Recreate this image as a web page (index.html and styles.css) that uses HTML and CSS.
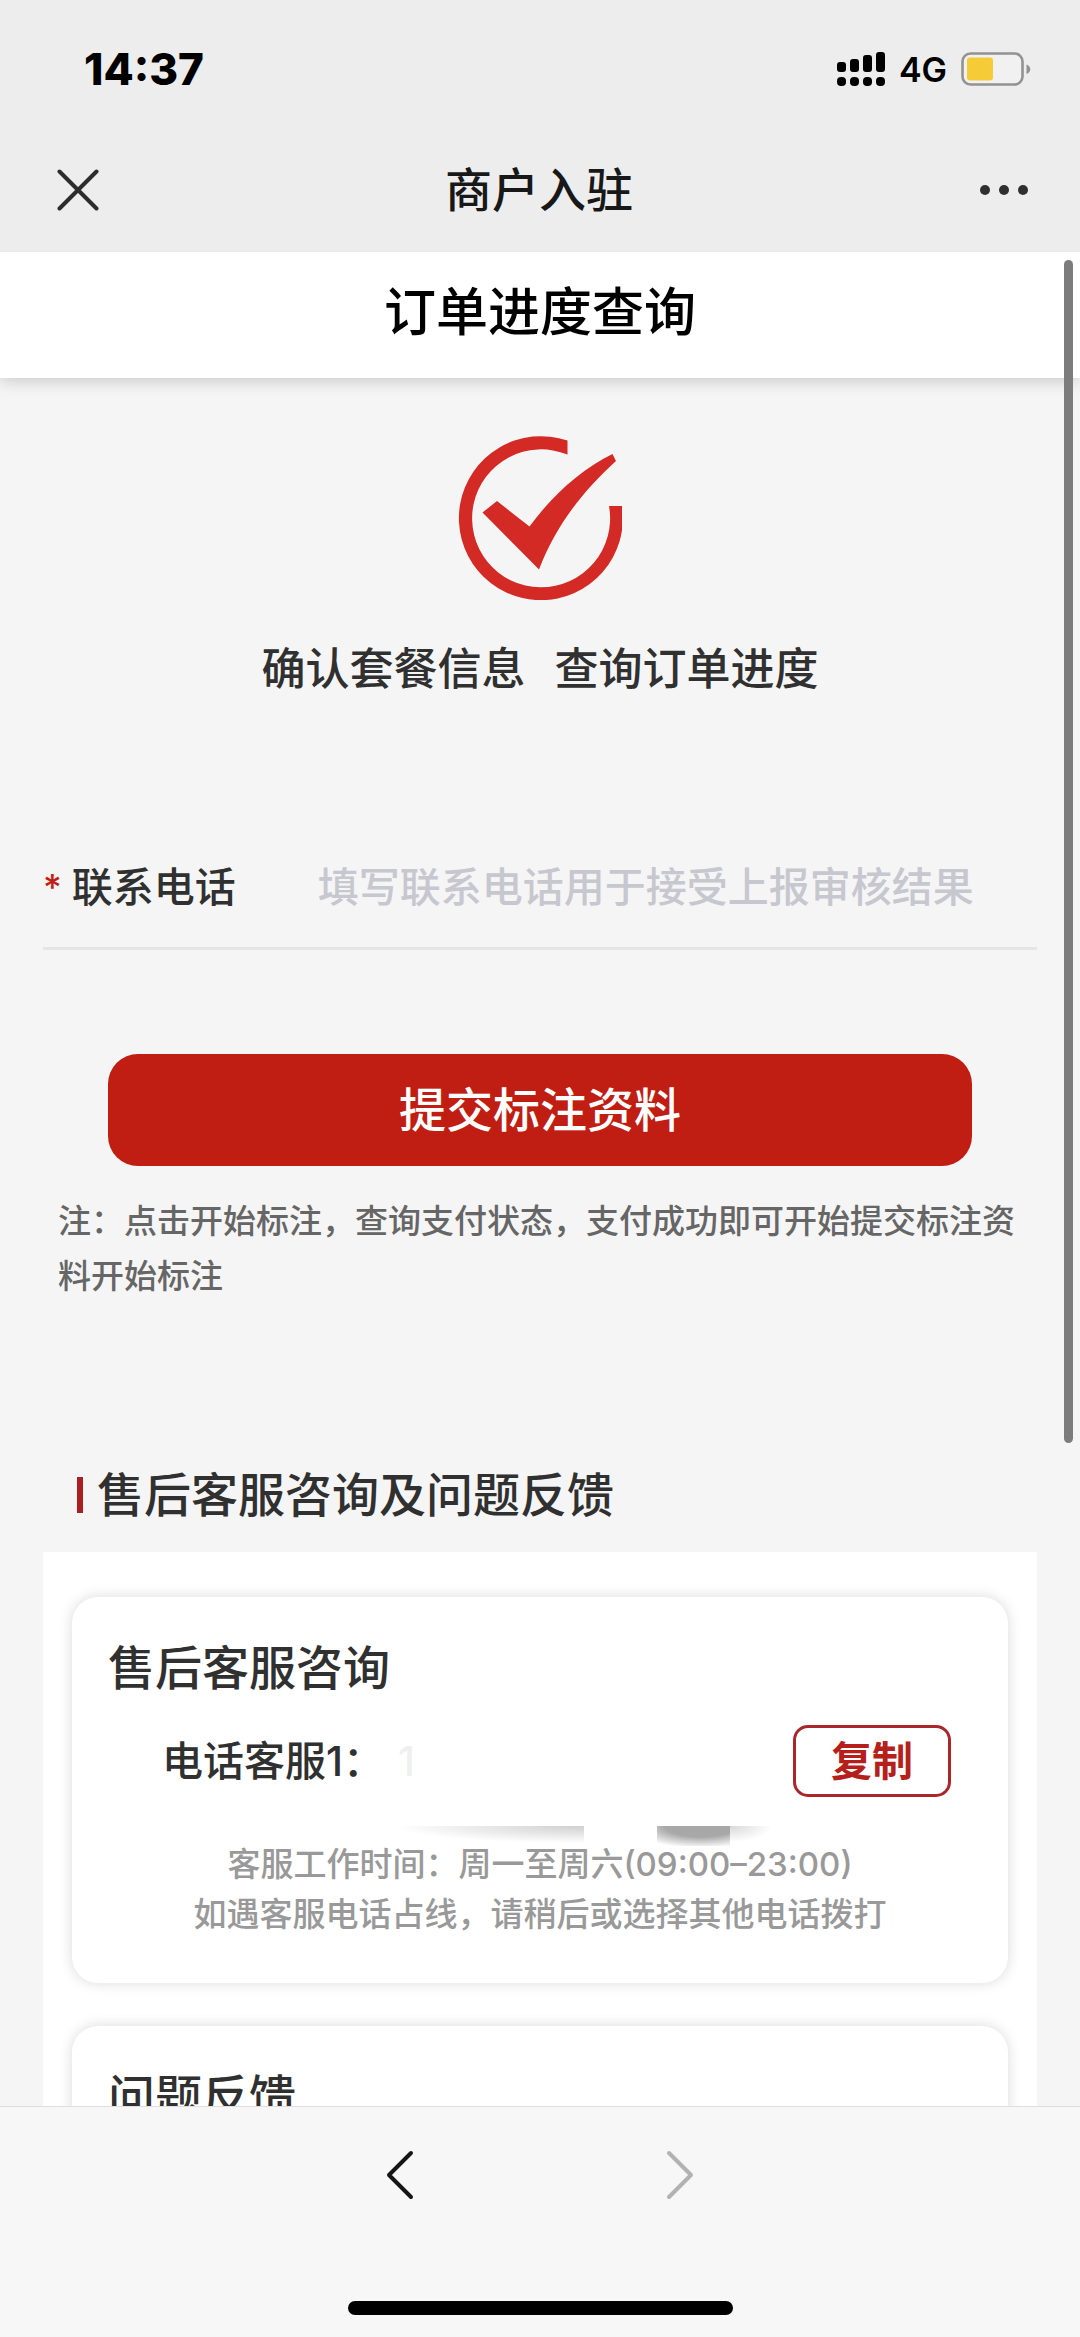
FILE: index.html
```html
<!DOCTYPE html>
<html lang="zh-CN">
<head>
<meta charset="utf-8">
<meta name="viewport" content="width=device-width, initial-scale=1">
<title>商户入驻</title>
<link rel="stylesheet" href="styles.css">
</head>
<body>
<div class="app">
  <header class="topbar">
    <div class="status">
      <span class="status-time">14:37</span>
      <div class="status-right">
        <svg class="signal" width="48" height="34" viewBox="0 0 48 34" aria-hidden="true">
          <rect x="0" y="10" width="9" height="10" rx="3"/><rect x="13" y="7" width="9" height="13" rx="3"/><rect x="26" y="3" width="9" height="17" rx="3"/><rect x="39" y="0" width="9" height="20" rx="3"/>
          <rect x="0" y="25" width="9" height="9" rx="4"/><rect x="13" y="25" width="9" height="9" rx="4"/><rect x="26" y="25" width="9" height="9" rx="4"/><rect x="39" y="25" width="9" height="9" rx="4"/>
        </svg>
        <span class="status-net">4G</span>
        <svg width="70" height="34" viewBox="0 0 70 34" aria-hidden="true">
          <rect x="1.5" y="1.5" width="60" height="31" rx="8" fill="#f1f1f2" stroke="#929292" stroke-width="2.6"/>
          <rect x="6" y="5.500" width="26" height="23" rx="3" fill="#f5cb38"/>
          <path d="M65.500 12.500c5 1.500 5 8 0 9.500z" fill="#929292"/>
        </svg>
      </div>
    </div>
    <div class="nav">
      <button class="icon-btn" type="button" aria-label="关闭">
        <svg width="42" height="42" viewBox="0 0 42 42"><path d="M2.500 2.500 39.500 39.500M39.500 2.500 2.500 39.500" fill="none" stroke="#2c2c2c" stroke-width="4" stroke-linecap="round"/></svg>
      </button>
      <span class="nav-title">商户入驻</span>
      <button class="icon-btn" type="button" aria-label="更多">
        <svg width="50" height="12" viewBox="0 0 50 12" fill="#2f2f2f"><circle cx="6" cy="6" r="5"/><circle cx="25" cy="6" r="5"/><circle cx="44" cy="6" r="5"/></svg>
      </button>
    </div>
  </header>

  <main class="content">
    <h1 class="banner">订单进度查询</h1>

    <section class="hero">
      <svg width="164" height="164" viewBox="0 0 164 164" fill="#d32a26" aria-hidden="true">
        <path d="M109.500 4.600A82 82 0 1 0 164 70H151A69 69 0 1 1 109.500 18.600Z"/>
        <path d="M24.500 76.500 39 65 71.500 90.500C93 61 123 33 154.500 18L158 25C125 55 98 89 81 133.500Z"/>
      </svg>
      <p class="hero-text"><span>确认套餐信息</span><span>查询订单进度</span></p>
    </section>

    <form class="form">
      <div class="field">
        <label class="field-label" for="phone"><span class="required">*</span>联系电话</label>
        <input class="field-input" id="phone" type="tel" placeholder="填写联系电话用于接受上报审核结果">
      </div>
      <button class="submit" type="button">提交标注资料</button>
      <p class="note">注：点击开始标注，查询支付状态，支付成功即可开始提交标注资料开始标注</p>
    </form>

    <section class="support">
      <h2 class="section-title">售后客服咨询及问题反馈</h2>
      <div class="panel">
        <article class="card">
          <h3 class="card-title">售后客服咨询</h3>
          <div class="phone-row">
            <span>电话客服1：</span><span class="phone-number">1</span>
            <button class="copy" type="button">复制</button>
          </div>
          <div class="shade"><i class="shade-light"></i><i class="shade-dark"></i><i class="shade-tail"></i></div>
          <p class="hours">客服工作时间：周一至周六(09:00–23:00)<br>如遇客服电话占线，请稍后或选择其他电话拨打</p>
        </article>
        <article class="card">
          <h3 class="card-title">问题反馈</h3>
        </article>
      </div>
    </section>
  </main>
  <div class="scrollbar"></div>

  <footer class="toolbar">
    <div class="toolbar-buttons">
      <button class="icon-btn" type="button" aria-label="后退">
        <svg width="28" height="50" viewBox="0 0 28 50"><path d="M25 3 3 25 25 47" fill="none" stroke="#161616" stroke-width="4" stroke-linecap="round" stroke-linejoin="round"/></svg>
      </button>
      <button class="icon-btn" type="button" aria-label="前进">
        <svg width="28" height="50" viewBox="0 0 28 50"><path d="M3 3 25 25 3 47" fill="none" stroke="#b2b2b2" stroke-width="4" stroke-linecap="round" stroke-linejoin="round"/></svg>
      </button>
    </div>
    <div class="home-indicator"></div>
  </footer>
</div>
</body>
</html>
```
FILE: styles.css
```css
* { box-sizing: border-box; }

body {
  margin: 0;
  font-family: Inter, "Noto Sans CJK SC", sans-serif;
  font-weight: 500;
  color: #303030;
  background: #f5f5f5;
}

h1, h2, h3, p { margin: 0; font-weight: 500; }

button {
  margin: 0;
  padding: 0;
  border: 0;
  background: none;
  font: inherit;
}

svg { display: block; }

.app {
  position: relative;
  display: flex;
  flex-direction: column;
  height: 100vh;
}

/* Status bar and navigation */
.topbar { background: #ededed; padding-bottom: 10px; }

.status {
  display: flex;
  align-items: center;
  justify-content: space-between;
  height: 138px;
  padding: 0 49px 0 84px;
  color: #000;
}

.status-time { font-size: 44px; font-weight: 800; }
.status-right { display: flex; align-items: center; gap: 14px; }
.status-net { font-size: 34px; font-weight: 600; }

.nav {
  display: flex;
  align-items: center;
  justify-content: space-between;
  height: 104px;
  padding: 0 51px 0 57px;
}

.nav-title { font-size: 47px; line-height: 60px; color: #181818; }

/* Scrolling page */
.content { flex: 1; min-height: 0; overflow: hidden; }

.banner {
  position: relative;
  padding: 25px 0 30px;
  background: #fff;
  box-shadow: 0 2px 16px rgba(0, 0, 0, 0.2);
  color: #000;
  font-size: 52px;
  line-height: 71px;
  text-align: center;
}

.hero {
  display: flex;
  flex-direction: column;
  align-items: center;
  gap: 38px;
  padding-top: 58px;
}

.hero-text { display: flex; gap: 29px; font-size: 44px; line-height: 62px; }

.form { margin: 157px 43px 0; }

.field {
  display: flex;
  align-items: center;
  gap: 82px;
  padding-bottom: 30px;
  border-bottom: 3px solid #e5e5e5;
  font-size: 41px;
  line-height: 60px;
}

.field-label { display: flex; gap: 10px; }
.required { color: #c01e13; font-size: 36px; }

.field-input {
  flex: 1;
  min-width: 0;
  height: 60px;
  padding: 0;
  border: 0;
  outline: 0;
  background: none;
  font: inherit;
  color: inherit;
}

.field-input::placeholder { color: #c7c7cf; opacity: 1; }

.submit {
  display: block;
  width: calc(100% - 130px);
  margin: 104px auto 28px;
  padding: 21px 0;
  border-radius: 30px;
  background: #c01e13;
  color: #fff;
  font-size: 47px;
  line-height: 70px;
}

.note {
  margin: 0 15px;
  color: #666;
  font-size: 33px;
  line-height: 55px;
}

.support { margin: 158px 43px 0; }

.section-title {
  display: flex;
  align-items: center;
  gap: 14px;
  margin: 0 34px 24px;
  font-size: 47px;
  line-height: 66px;
}

.section-title::before {
  content: "";
  width: 6px;
  height: 36px;
  background: #a81f24;
}

.panel {
  display: grid;
  gap: 43px;
  padding: 45px 29px;
  background: #fff;
}

.card {
  position: relative;
  padding: 36px 36px 44px;
  border-radius: 26px;
  background: #fff;
  box-shadow: 0 0 14px rgba(0, 0, 0, 0.15);
}

.card-title { font-size: 47px; line-height: 70px; }

.phone-row {
  display: flex;
  align-items: center;
  margin: 22px 21px 42px 54px;
  font-size: 41px;
  line-height: 66px;
}

.phone-number { margin-left: 14px; color: #efefef; }

.copy {
  margin-left: auto;
  padding: 0 35px;
  border: 3px solid #a9262b;
  border-radius: 15px;
  color: #b5201b;
  font-weight: 700;
}

/* Soft shadow strip under the phone number */
.shade {
  position: absolute;
  top: 229px;
  left: 320px;
  display: flex;
  height: 20px;
}

.shade-light {
  width: 192px;
  margin-right: 73px;
  background: radial-gradient(ellipse 190px 17px at 100% 0, #cfcfcf, #fff);
}

.shade-dark {
  width: 73px;
  background: radial-gradient(ellipse 72px 22px at 60% 0, #a8a8a8 50%, #fff);
}

.shade-tail {
  width: 42px;
  background: radial-gradient(ellipse 42px 16px at 0 0, #d8d8d8, #fff);
}

.hours {
  position: relative;
  color: #999;
  font-size: 33px;
  line-height: 50px;
  text-align: center;
}

.scrollbar {
  position: absolute;
  top: 260px;
  right: 7px;
  width: 9px;
  height: 1183px;
  border-radius: 5px;
  background: #7c7c7c;
}

/* Browser toolbar */
.toolbar {
  position: relative;
  display: flex;
  flex-direction: column;
  align-items: center;
  padding: 43px 0 22px;
  border-top: 1px solid #dedede;
  background: #f7f7f7;
}

.toolbar-buttons { display: flex; gap: 252px; }

.home-indicator {
  width: 385px;
  height: 14px;
  margin-top: 101px;
  border-radius: 7px;
  background: #000;
}
```
